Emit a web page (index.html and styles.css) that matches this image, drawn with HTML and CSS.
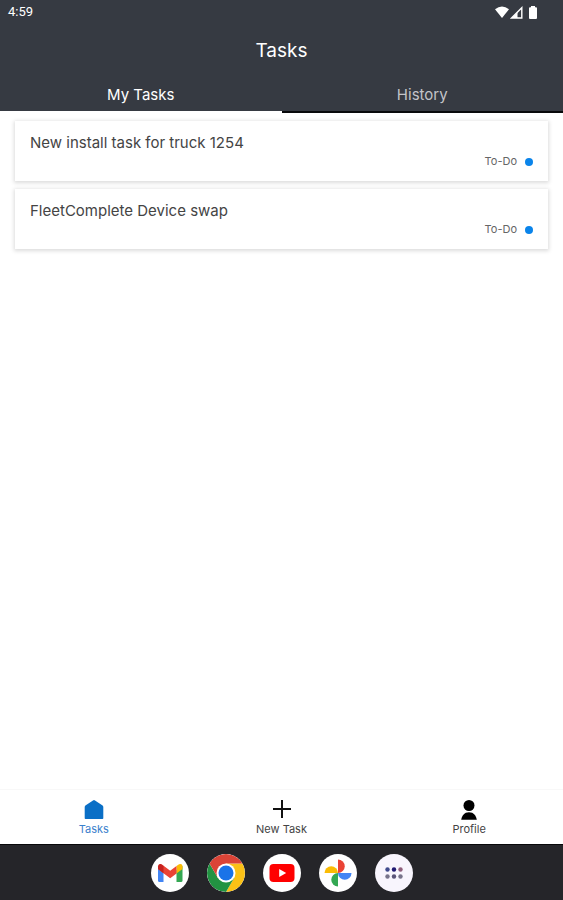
FILE: index.html
```html
<!DOCTYPE html>
<html lang="en">
<head>
<meta charset="utf-8">
<meta name="viewport" content="width=device-width, initial-scale=1">
<title>Tasks</title>
<link rel="stylesheet" href="styles.css">
</head>
<body>
<header class="header">
  <div class="status">
    <time>4:59</time>
    <div class="status-icons">
      <svg width="14" height="12" viewBox="0 0 14 12"><path d="M0 3.200Q7-2.200 14 3.200L7 12Z" fill="#fff"/></svg>
      <svg width="13" height="13" viewBox="0 0 13 13"><path d="M11.800 1.800V12H1.600Z" fill="none" stroke="#fff" stroke-width="1.400"/><path d="M7.500 6V12H2Z" fill="#fff"/></svg>
      <svg class="battery" width="8" height="13" viewBox="0 0 8 13"><path d="M2 0H6V1.200H7Q8 1.200 8 2.200V12Q8 13 7 13H1Q0 13 0 12V2.200Q0 1.200 1 1.200H2Z" fill="#fff"/></svg>
    </div>
  </div>
  <h1 class="title">Tasks</h1>
  <div class="tabs" role="tablist">
    <button class="tab active" role="tab" aria-selected="true">My Tasks</button>
    <button class="tab" role="tab" aria-selected="false">History</button>
  </div>
</header>
<main class="list">
  <article class="card">
    <h2 class="card-title">New install task for truck 1254</h2>
    <p class="state">To-Do<span class="dot"></span></p>
  </article>
  <article class="card">
    <h2 class="card-title">FleetComplete Device swap</h2>
    <p class="state">To-Do<span class="dot"></span></p>
  </article>
</main>
<nav class="nav">
  <a class="nav-item current" href="#tasks">
    <svg width="20" height="20" viewBox="0 0 20 20"><path d="M9 .4Q10-.3 11 .4L18.600 5.600Q19.300 6.200 19.300 7V18.200Q19.300 19 18.500 19H1.500Q.7 19 .7 18.200V7Q.7 6.200 1.400 5.600Z" fill="#0a6fc6"/></svg>
    Tasks
  </a>
  <a class="nav-item" href="#new">
    <svg width="20" height="20" viewBox="0 0 20 20"><path d="M10 0V18M1 9H19" stroke="#111" stroke-width="2"/></svg>
    New Task
  </a>
  <a class="nav-item" href="#profile">
    <svg width="20" height="20" viewBox="0 0 20 20"><circle cx="10" cy="5.500" r="5.500"/><path d="M2.200 19.800Q3 14.800 6.800 12.800Q10 11.600 13.200 12.800Q17 14.800 17.800 19.800Z"/></svg>
    Profile
  </a>
</nav>
<footer class="dock">
  <button class="app" aria-label="Gmail">
    <svg viewBox="0 0 38 38"><path d="M7 12V26.500Q7 28 8.500 28H12.500V16Z" fill="#4285f4"/><path d="M25.500 16V28H30Q31.500 28 31.500 26.500V12Z" fill="#34a853"/><path d="M25.500 12L28 10.200Q31.500 9 31.500 12.800V15L25.500 19.500Z" fill="#fbbc04"/><path d="M7 15V12.800Q7.500 8.800 11 10.600L19.200 16.800L25.500 12V19.500L19.200 24.200L12.500 19.200Z" fill="#ea4335"/><path d="M7 15V12.800Q7.300 9.700 9.800 10L12.500 12V19.200Z" fill="#c5221f"/></svg>
  </button>
  <button class="app" aria-label="Chrome">
    <svg viewBox="0 0 38 38"><path d="M19 9.500H35.450A19 19 0 0 1 19 38L27.230 23.750Z" fill="#fbc116"/><path d="M10.770 23.750L2.550 9.500A19 19 0 0 0 19 38L27.230 23.750L19 19Z" fill="#229342"/><path d="M2.550 9.500L10.770 23.750L19 9.500H35.450A19 19 0 0 0 2.550 9.500Z" fill="#db4437"/><circle cx="19" cy="19" r="9.500" fill="#fff"/><circle cx="19" cy="19" r="7.500" fill="#1a73e8"/></svg>
  </button>
  <button class="app" aria-label="YouTube">
    <svg viewBox="0 0 38 38"><rect x="6.500" y="10" width="25" height="18" rx="4" fill="#f00"/><path d="M16.200 15L23.200 19L16.200 23Z" fill="#fff"/></svg>
  </button>
  <button class="app" aria-label="Photos">
    <svg viewBox="0 0 38 38"><path d="M19 5.500A6.750 6.750 0 0 1 19 19Z" fill="#ea4335"/><path d="M32.500 19A6.750 6.750 0 0 1 19 19Z" fill="#4285f4"/><path d="M19 32.500A6.750 6.750 0 0 1 19 19Z" fill="#34a853"/><path d="M5.500 19A6.750 6.750 0 0 1 19 19Z" fill="#fbbc04"/></svg>
  </button>
  <button class="app apps" aria-label="All apps">
    <svg viewBox="0 0 38 38"><g fill="#77738a"><circle cx="12.500" cy="15.500" r="2.200" fill="#3f4a8c"/><circle cx="19" cy="15.500" r="2.200" fill="#211a72"/><circle cx="25.500" cy="15.500" r="2.200" fill="#8f5f7c"/><circle cx="12.500" cy="22.500" r="2.200"/><circle cx="19" cy="22.500" r="2.200" fill="#5a5478"/><circle cx="25.500" cy="22.500" r="2.200"/></g></svg>
  </button>
</footer>
</body>
</html>
```
FILE: styles.css
```css
* { box-sizing: border-box; }
body {
  margin: 0;
  min-height: 100vh;
  display: flex;
  flex-direction: column;
  background: #fff;
  color: #444;
  font-family: Inter, "Liberation Sans", sans-serif;
}
h1, h2, p { margin: 0; }
button { font: inherit; border: 0; padding: 0; }
svg { display: block; }
.header { background: #363a42; color: #fff; }
.status {
  display: flex;
  align-items: center;
  justify-content: space-between;
  height: 24px;
  padding: 0 26px 0 8px;
  font: 400 13px/24px Roboto, sans-serif;
}
.status-icons { display: flex; align-items: center; gap: 1px; }
.battery { margin-left: 5px; }
.title {
  font-size: 19px;
  font-weight: 400;
  line-height: 54px;
  text-align: center;
}
.tabs { display: flex; }
.tab {
  flex: 1;
  height: 35px;
  border-bottom: 2px solid #08090b;
  background: none;
  color: #c3c4c8;
  font-size: 15px;
  line-height: 33px;
}
.tab.active { border-color: #fff; color: #fff; }
.list {
  flex: 1;
  display: flex;
  flex-direction: column;
  gap: 8px;
  padding: 8px 15px;
}
.card {
  padding: 12px 15px 11px;
  background: #fff;
  box-shadow: 0 1px 4px 1px rgba(0, 0, 0, .14);
}
.card-title {
  font-size: 15px;
  font-weight: 400;
  line-height: 20px;
}
.state {
  display: flex;
  align-items: center;
  justify-content: flex-end;
  gap: 8px;
  color: #666;
  font-size: 11px;
  line-height: 17px;
}
.dot {
  width: 8px;
  height: 8px;
  border-radius: 50%;
  background: #0a84ea;
}
.nav {
  display: flex;
  height: 55px;
  border-top: 1px solid #f8f8f8;
}
.nav-item {
  flex: 1;
  display: flex;
  flex-direction: column;
  align-items: center;
  gap: 2px;
  padding-top: 10px;
  color: #444;
  font-size: 11px;
  line-height: 14px;
  text-decoration: none;
}
.current { color: #3a80cc; }
.dock {
  display: flex;
  align-items: center;
  justify-content: center;
  gap: 18px;
  height: 56px;
  border-top: 1px solid #08080a;
  background: #252529;
}
.app {
  width: 38px;
  height: 38px;
  border-radius: 50%;
  overflow: hidden;
  background: #fff;
}
.apps { background: #f8f5fd; }
```
